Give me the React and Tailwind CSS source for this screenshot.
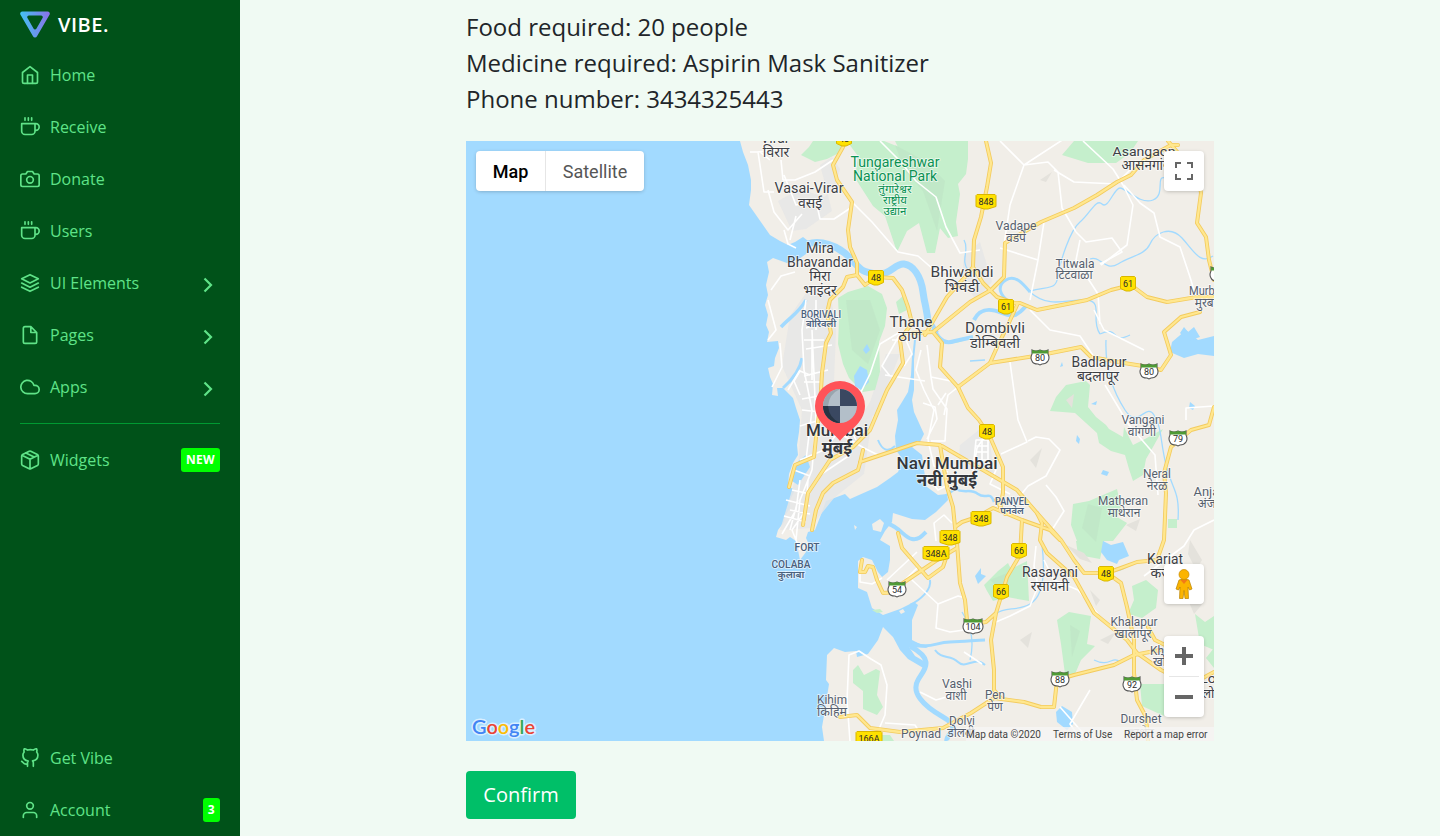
import React from "react";

const icons = {
  home: <><path d="M3 9l9-7 9 7v11a2 2 0 0 1-2 2H5a2 2 0 0 1-2-2z" /><path d="M9 22V12h6v10" /></>,
  coffee: <><path d="M18 8h1a4 4 0 0 1 0 8h-1M2 8h16v9a4 4 0 0 1-4 4H6a4 4 0 0 1-4-4V8zM6 1v3M10 1v3M14 1v3" /></>,
  camera: <><path d="M23 19a2 2 0 0 1-2 2H3a2 2 0 0 1-2-2V8a2 2 0 0 1 2-2h4l2-3h6l2 3h4a2 2 0 0 1 2 2z" /><circle cx="12" cy="13" r="4" /></>,
  layers: <path d="M12 2 2 7l10 5 10-5-10-5zM2 17l10 5 10-5M2 12l10 5 10-5" />,
  file: <path d="M13 2H6a2 2 0 0 0-2 2v16a2 2 0 0 0 2 2h12a2 2 0 0 0 2-2V9zM13 2v7h7" />,
  cloud: <path d="M18 10h-1.26A8 8 0 1 0 9 20h9a5 5 0 0 0 0-10z" />,
  box: <path d="M12.89 1.45l8 4A2 2 0 0 1 22 7.24v9.53a2 2 0 0 1-1.11 1.79l-8 4a2 2 0 0 1-1.79 0l-8-4a2 2 0 0 1-1.1-1.8V7.24a2 2 0 0 1 1.11-1.79l8-4a2 2 0 0 1 1.78 0zM2.32 6.16 12 11l9.68-4.84M12 22.76V11M7 3.5l10 5" />,
  github: <path d="M9 19c-5 1.5-5-2.5-7-3m14 6v-3.87a3.37 3.37 0 0 0-.94-2.61c3.14-.35 6.44-1.54 6.44-7A5.44 5.44 0 0 0 20 4.77 5.07 5.07 0 0 0 19.91 1S18.73.65 16 2.48a13.38 13.38 0 0 0-7 0C6.27.65 5.09 1 5.09 1A5.07 5.07 0 0 0 5 4.77a5.44 5.44 0 0 0-1.5 3.78c0 5.42 3.3 6.61 6.44 7A3.37 3.37 0 0 0 9 18.13V22" />,
  user: <><path d="M20 21v-2a4 4 0 0 0-4-4H8a4 4 0 0 0-4 4v2" /><circle cx="12" cy="7" r="4" /></>,
};

function NavItem({ icon, label, arrow, badge }) {
  return (
    <a className="flex h-[52px] items-center text-base text-[#5fe388]">
      <svg className="h-5 w-5 shrink-0" viewBox="0 0 24 24" fill="none" stroke="currentColor" strokeWidth="2" strokeLinecap="round" strokeLinejoin="round">{icons[icon]}</svg>
      <span className="ml-2.5 flex-1">{label}</span>
      {arrow && (
        <svg className="mr-[7px] mt-1 h-4 w-[10px]" viewBox="0 0 10 16" fill="none" stroke="currentColor" strokeWidth="2.2"><path d="M1.5 1.5 8 8l-6.500 6.500" /></svg>
      )}
      {badge && <span className="flex h-6 items-center rounded-[3px] bg-[#00ff00] px-[5px] text-xs font-bold tracking-[0.3px] text-white">{badge}</span>}
    </a>
  );
}

const greens = [
  "M801 155l8-8 4-6h30l-4 12-12 6-12 3z",
  "M850 141h34l20 8 36 20 10 20-13 14 4 20-6 30-8 0-8-30-12 8-10 21-12-36-12-10-18-28 3-22-12-16z",
  "M895 141h73v18l-2 15-8 10 2 10-4 28 2 14-10 2-12-15-4-24-14-20-18-28z",
  "M838 298l10-6 20-6 14 8 5 14-2 18-6 16 1 30-5 18-12 2-14-14-6-14-5-20 1-24z",
  "M1062 155l12-14h64l-8 12-14 10-28 0z",
  "M1050 411l6-14 10-12 20-4 4 4-2 22 8 10 10 8 3 4 14 8 1-10 9 18 12-6 18-10-10 18-7 12-3 16-10 6-4-12-4-14-14-4-12-8-2-10-22-20z",
  "M1073 504l16-3 28-12 4 18 -4 10 10 6-14 18-36 0-6-16z",
  "M984 585l14-14 10-8 3 6 16-8 2 40-22-4-14 4-6-10z",
  "M1057 620l12-8 22 4-4 28 8 2-14 14-6 14-10 0-4-30z",
  "M1134 600l-2-14 14-6 12 10-2 18-14 10-14-4z",
  "M1140 684l24 0v32l-22-10z",
  "M853 670l5-5 6 10 12-6 4 2-3 24 6 12-6 8-14-6 0-18-10-8z",
  "M870 735l20 0 4 6h-24z",
  "M1076 541l28 0-4 18-22-4z",
  "M1168 519h9v9h-9zM896 302l7-6 4 14-8 4z",
  "M1195 614l10 8 9-6v34l-14-6zM1206 658l8-10v20z",
  "M955 341l9-4 6 2-14 4zM872 610l8-1 3 3-6 1zM1190 341l14 0-10 3z",
];
const urban = [
  "M820 165l12-8 8 12-6 20-10 8-24-8-22 12 14 30 14-2 26-18-6-24z",
  "M808 290l22 0 6 40-2 50 4 40 26 0 10-16-10 70-30 24-24 30-30 2 18-60 4-60-20-44 8-50z",
  "M964 256l16-14 12 40-16 18-14-20z",
  "M960 445l20-16 10 14 4 30-36-4zM870 402l16-48 14 0-24 60-20 10z",
];
const waters = [
  "M854 376l6-10 7 4 2 12-8 8-6-4zM863 350l4-6 3 6-4 4z",
  "M1172 342l14-12 12 10 16-4v20l-16-2-14 4-14-6z",
  "M1103 541l8 4 12-3 6 14-10 4-2 4-10-4-6-8z",
  "M1056 712l6-6 10 6 1 12-6 6-10-8z",
  "M1180 333l4-6 4 5 6-5 6 10-12 4z",
  "M796 463l10-8 4 12-12 18-6-4z",
  "M975 576l6-8 0 6 5 2-8 8zM1062 362l-2 5 3-1zM1190 402l5 4-2 4-4-2zM1077 435l3 4-1 5-3-3zM1103 470l6 2-2 4-6-2zM1091 404l6-3-1 4z",
];
const creeks = [
  ["M808 244C820 240 838 245 850 258S862 272 876 274S895 263 904 264S921 276 923 292S928 310 928 326", 7],
  ["M915 340L913 360", 2],
  ["M930 320L937 333M933 328C940 342 946 344 955 341L973 337M974 320C980 308 990 308 1002 313S1018 315 1026 306", 4],
  ["M1010 302C1000 296 996 286 1006 280S1024 285 1030 292", 3],
  ["M781 327C790 317 798 314 806 300", 3.5],
  ["M783 388C792 380 800 370 802 358", 3],
  ["M910 646C935 660 925 668 918 680S922 705 943 717S944 735 947 741", 5],
  ["M912 643C930 650 935 642 950 642S975 640 985 640", 3],
  ["M935 650C942 660 950 654 958 662S975 655 985 665", 2],
  ["M889 524C900 528 905 538 912 539S922 536 926 532", 4],
  ["M930 580C932 590 920 600 910 605", 2],
  ["M955 489C965 494 970 488 978 494S990 490 994 502M944 497L955 489", 2.5],
  ["M878 440C882 450 888 453 895 446", 2],
];
const streams = [
  "M1030 291C1050 286 1056 290 1058 276S1070 230 1080 222S1096 198 1102 204S1114 188 1120 188S1140 205 1153 200S1155 175 1165 178",
  "M1090 259C1100 255 1105 272 1118 264S1145 255 1150 244S1170 225 1182 238S1200 265 1213 256",
  "M1030 292C1050 310 1070 298 1087 300S1090 320 1100 334",
  "M1106 340C1105 365 1112 390 1125 410S1146 402 1154 415S1160 440 1166 465S1180 490 1178 520",
  "M1042 545C1045 570 1044 596 1030 604S1005 606 996 614",
  "M962 612C970 624 975 640 970 660M1100 334C1120 325 1110 345 1130 335",
  "M1110 570C1125 575 1130 558 1145 562M1094 660C1110 668 1112 655 1120 662",
  "M970 361l15-1M964 240C970 250 960 260 968 270M978 470L962 485",
];
const lanes = [
  "M750 152l8 0 6 40 10 0M757 152l18-2M770 160l-10-8M781 160l2 20 12 0 20-8 18-12M768 190l6 22 14 18 14-16M784 175l12 30 20-4 4 18 14 0 18-12M790 240l6-24M784 230l4 14 8 4M852 202l20 20 26 30 20 4 16 14 26 4M880 141l20 20 16 20 20 16 10 30 14 26 20-3",
  "M1000 141l24 24 24-3 10 10 4 36 14 24M1024 165l-14 40-6 40M1024 165l46-30M1054 170l20 12 42 2 20-20M1083 141l30 28 10 16 10 20-6 40-26 20M1124 185l16 18 14 10 6 24 20 10 10 30 6 20",
  "M1000 248l38 12 6-38M1038 260l-8 40M1076 232l10 10 26-4 10 14-22 12M1080 240l-4 20 22 34 2 30M1030 310l20 20 30 6 20 30M1094 310l10 20 40 20M1010 362l8 58 9 22-26 12",
  "M1028 441l8-4 13 2 11 11-14 26-18 10-8 10M1046 485l10 12 8 14-14 22M1105 385l24 40 26 30 3 40",
  "M780 343l2 24-10 20M800 370l-12 20M806 300l-4 30 2 40 8 40-6 50M830 320l-24 8M832 345l-26 4M828 370l-24 6M824 395l-22 4M820 420l-20 6M812 330l4 90-4 50M812 340l0 40M804 340h20M804 382h16M802 410l18 2M842 400l18-6 10-20 10-30 20-12M846 420l10 20M800 480l-4 30-14 24M808 480l-2 30-14 20 8 20M786 500l24 6M784 516l22 6M794 470l16 6M792 490l18 4M790 510l20 4M798 500l-8 30M812 470l-12 30-4 40M840 430l-16 20-24 10M850 455l-30 20M844 436l20 12 16 8",
  "M800 395l-6-14 6-10 10 4M816 300l0 30M806 312h22M768 300l8 30-8 10M771 290l10-14 14-4",
  "M921 350l-5 20 8 20 10 20-6 30M927 345l4 32 20 4M931 377l2 12 14 20-2 32-14 0M923 403l12 4 2 12-10 20M938 405l8-12M885 375l40 6M900 334l-18 32 8 10M892 340l14 0 6 14-8 12M958 387l-10 8-4 20M976 440l12 0 0 20-14 0zM976 446h12M976 452h12M982 440v20M928 440l6 26 14 6M930 480l8 10 8-4",
  "M887 580l30-28M912 580l26 24-2 24 14 4 14-2M938 604l20-8 8 2M920 565l-14 14M860 572l0 10 12 2 10-6M936 541l-2-18 10-8 8 8",
  "M850 741l-3-40 2-46 10-4 12 8 10 6 6 20-2 30-6 14M885 723l30 2 6 10M920 692l16 8 14-4M996 622l14-6 20-10 8-20-4-20 2-20M964 652l18 12M1044 560l10 20 24 10 20 24M1090 690l-20 34 12 17M1060 707l30 34",
  "M1214 520l-20 10-10 16-40 30M1186 420l0-12 28-2M985 436l-8 12-4 24M996 470l-6 14 20 10",
];
const roads = [
  "M844 141L843 147L833 165L837 180L852 202L848 230L850 247L857 263L857 275L865 285L876 277L893 278L902 290L908 307L912 323L900 340L903 363L887 390L870 430L853 447L830 460L808 493L803 525",
  "M857 275L847 277L843 287L830 300L827 313L831 333L826 343L822 373L820 407L816 437L814 457L795 465L789 487",
  "M863 450L860 463L858 470L833 483L823 493L816 510L812 530M860 462L887 453L917 443L940 445L942 457L947 487L953 507L955 527L957 543L960 583L965 600L967 620",
  "M912 333L933 332L970 302L991 290L1004 277L1005 243L1041 222L1074 208L1097 195L1117 182L1131 175L1144 160L1171 145L1178 145",
  "M925 335L947 297L965 277L973 267M986 141L991 163L987 187L981 217L974 240L973 267L983 283L997 297L1014 303L1020 303L1037 310L1087 300L1111 290L1131 285L1147 297L1167 302L1197 297L1214 297",
  "M1168 141L1184 160L1198 175L1201 193L1197 223L1206 237L1209 260L1214 280M1200 312L1181 317L1164 332L1168 345L1171 355L1161 370L1149 367L1124 363L1091 357L1081 347L1041 355L990 363L958 387",
  "M933 332L942 343L940 367L958 387L968 408L979 420L990 437L1003 467L1003 493L1000 508M990 363L998 345L1007 327L1018 303L1014 303",
  "M942 446L983 470L1017 490L1037 513L1061 540L1074 560L1084 573L1107 573L1121 568L1137 562L1157 560L1164 540L1166 493L1164 473L1171 447L1191 430L1209 425L1214 407",
  "M955 527L962 522L977 517L993 508L1022 520L1050 530L1060 540M996 500L1005 514M1037 513L1042 523L1040 540L1047 553L1074 577L1094 613L1127 640L1137 653L1161 670L1190 685L1214 672",
  "M1107 573L1121 583L1127 607L1134 640L1134 673L1137 700L1146 717L1148 741M1134 655L1114 665L1074 675L1057 680L1054 707L1041 707L1024 702L994 698L971 713L943 728L900 732L870 728L857 715L840 717",
  "M1022 520L1020 555L1007 577L996 613L991 640L994 670L994 690L1001 698M972 624L986 622L996 613",
  "M898 533L902 548L928 578L943 567L947 555M900 585L937 560L957 548M862 560L860 572L865 572L868 566L873 567L877 580L883 593L896 592M1148 627L1155 640L1175 650M1134 655L1160 650",
];
const g = "#3d4045", sm = "#56606e", blue = "#4a607c", park = "#0b9153";
// x centre, baseline, size, width, text, colour, weight
const labels = [
  [775, 143, 14, 0, "Virar", g], [776, 157, 14, 0, "विरार", g],
  [809, 193, 14, 69, "Vasai-Virar", g], [810, 208, 14, 0, "वसई", g],
  [895, 167, 14, 89, "Tungareshwar", park], [895, 181, 14, 84, "National Park", park],
  [895, 193, 11.5, 0, "तुंगारेश्वर", park], [895, 204, 11.5, 0, "राष्ट्रीय", park], [895, 215, 11.5, 0, "उद्यान", park],
  [820, 253, 14, 28, "Mira", g], [820, 267, 14, 66, "Bhavandar", g], [820, 281, 14, 0, "मिरा", g], [820, 295, 14, 0, "भाइंदर", g],
  [821, 318, 10, 40, "BORIVALI", blue, 500], [821, 327, 9.5, 0, "बोरिवली", blue, 600],
  [962, 277, 15, 63, "Bhiwandi", g], [962, 292, 15, 0, "भिवंडी", g],
  [911, 327, 15, 43, "Thane", g], [910, 341, 15, 0, "ठाणे", g],
  [995, 333, 14, 60, "Dombivli", g], [995, 348, 14.5, 0, "डोम्बिवली", g],
  [1016, 230, 12, 41, "Vadape", sm], [1016, 242, 12, 0, "वडपे", sm],
  [1075, 268, 12, 39, "Titwala", sm], [1074, 279, 12, 0, "टिटवाळा", sm],
  [1144, 156, 13.5, 63, "Asangaon", g], [1146, 170, 13.5, 0, "आसनगांव", g],
  [1208, 295, 12, 38, "Murbad", sm], [1209, 307, 12, 0, "मुरबाड", sm],
  [1099, 367, 14, 55, "Badlapur", g], [1098, 381, 14, 0, "बदलापूर", g],
  [1143, 424, 12, 43, "Vangani", sm], [1142, 436, 12, 0, "वांगणी", sm],
  [1157, 478, 12, 28, "Neral", sm], [1157, 490, 12, 0, "नेरळ", sm],
  [1123, 505, 12, 50, "Matheran", sm], [1124, 517, 12, 0, "माथेरान", sm],
  [1210, 496, 12, 33, "Anjap", sm], [1210, 508, 12, 0, "अंजप", sm],
  [837, 436, 17, 62, "Mumbai", "#34373c", 500], [837, 454, 17, 0, "मुंबई", "#34373c", 700],
  [947, 469, 17, 101, "Navi Mumbai", "#34373c", 500], [947, 486, 17, 0, "नवी मुंबई", "#34373c", 700],
  [1012, 505, 10, 34, "PANVEL", blue, 500], [1012, 514, 9.5, 0, "पनवेल", blue, 600],
  [807, 551, 10, 25, "FORT", blue, 500], [791, 568, 10, 39, "COLABA", blue, 500], [791, 578, 10, 0, "कुलाबा", blue, 600],
  [1050, 577, 14, 56, "Rasayani", g], [1050, 591, 14, 0, "रसायनी", g],
  [1165, 564, 14, 36, "Karjat", g], [1165, 578, 14, 0, "कर्जत", g],
  [1134, 626, 12.5, 47, "Khalapur", sm], [1133, 638, 12.5, 0, "खालापूर", sm],
  [1170, 655, 12, 40, "Khopoli", sm], [1170, 666, 12, 0, "खोपोली", sm],
  [1225, 683, 13, 50, "Lonavla", g], [1225, 698, 13, 0, "लोणावळा", g],
  [832, 704, 12.5, 30, "Kihim", sm], [832, 716, 12.5, 0, "किहिम", sm],
  [957, 688, 12, 30, "Vashi", sm], [956, 700, 12, 0, "वाशी", sm],
  [995, 699, 12, 20, "Pen", sm], [995, 711, 12, 0, "पेण", sm],
  [921, 738, 12.5, 40, "Poynad", sm], [962, 725, 12, 26, "Dolvi", sm], [961, 737, 12, 0, "डोलवी", sm],
  [1141, 723, 12, 41, "Durshet", sm], [1141, 737, 12, 0, "दुरशेत", "#aaa"],
];
const shields = [
  [844, 139, "48"], [876, 278, "48"], [986, 202, "848"], [1128, 284, "61"], [1006, 307, "61"], [987, 432, "48"],
  [981, 519, "348"], [950, 538, "348"], [936, 554, "348A"], [1019, 551, "66"], [1001, 592, "66"], [1106, 574, "48"], [869, 739, "166A"],
];
const stateShields = [[1040, 357, "80"], [1149, 371, "80"], [1178, 438, "79"], [897, 589, "54"], [973, 626, "104"], [1060, 679, "88"], [1132, 684, "92"], [1219, 274, "79"]];

function MapArt() {
  return (
    <svg className="block h-[600px] w-[748px] font-['Roboto','Noto_Sans_Devanagari','Noto_Sans',sans-serif]" viewBox="466 141 748 600">
      <rect x="466" y="141" width="748" height="600" fill="#a2daff" />
      <path fill="#f1eee8" d="M740 141L743 152L748 165L751 180L751 190L749 205L756 215L763 225L770 235L780 241L788 245L795 242L803 237L812 244L806 254L799 259L787 263L773 258L767 262L769 272L766 285L768 295L765 305L768 315L766 325L769 332L767 342L778 341L779 348L775 358L774 366L768 368L770 377L773 384L772 395L778 396L777 388L783 388L793 398L796 408L800 420L799 432L797 445L798 455L793 463L789 474L788 486L795 490L790 500L790 508L785 516L784 522L778 530L776 537L786 540L790 537L796 541L798 550L800 560L806 552L809 545L806 538L808 532L815 530L822 512L826 501L845 494L850 499L877 487L890 478L898 472L903 460L896 450L895 436L898 420L897 410L902 402L908 392L911 375L912 356L914 356L914 390L912 400L914 412L924 434L920 442L912 447L922 455L924 470L927 487L938 495L947 494L948 500L936 512L925 520L912 519L893 513L892 522L885 531L880 540L890 546L890 560L888 572L882 577L878 572L872 560L863 557L858 561L858 588L867 592L872 608L883 615L900 609L914 602L918 605L912 620L912 640L928 648L909 647L915 656L927 663L925 669L908 659L900 650L893 637L883 627L878 640L868 654L857 657L856 651L845 652L834 648L827 655L826 680L829 684L825 710L822 727L824 741L1214 741L1214 141Z" />
      <path fill="#f1eee8" d="M872 524l8-5 4 4-3 9-8-2zM854 525l3 2-2 3zM899 611l4-2 2 3-4 2z" />
      {urban.map((d) => <path key={d} d={d} fill="#e6e6e6" opacity=".85" />)}
      {greens.map((d) => <path key={d} d={d} fill="#c5efcc" strokeLinejoin="round" />)}
      <path fill="#bfe6c6" opacity=".7" d="M895 145l30 16 20 20-8 50-14-40-18-20zM846 300l24 0 10 30-12 34-16-14zM1088 504l14 4-6 34-14-14zM990 580l20-8-4 22zM1070 625l10 6-8 26z" />
      <path fill="#e4e2dc" d="M1040 180l12-8-6 10zM1066 545l18 8 8 10-12-4zM1030 460l12-12-6 20zM1190 540l12 20-6 10-8-16zM1100 640l16-8-8 12zM1066 400l8-6-2 14zM1126 525l14-6-4 12zM1184 590l20 12-10 12zM1020 640l12-8-4 16zM1090 590l10 10-4 6z" />
      {creeks.map(([d, w]) => <path key={d} d={d} fill="none" stroke="#a2daff" strokeWidth={w} />)}
      {streams.map((d) => <path key={d} d={d} fill="none" stroke="#a2daff" strokeWidth="1.3" />)}
      {waters.map((d) => <path key={d} d={d} fill="#a2daff" />)}
      {lanes.map((d) => <path key={d} d={d} fill="none" stroke="#fff" strokeWidth="1.6" strokeLinejoin="round" />)}
      {roads.map((d) => <path key={d} d={d} fill="none" stroke="#f3cb5e" strokeWidth="4" strokeLinejoin="round" strokeLinecap="round" />)}
      {roads.map((d) => <path key={d} d={d} fill="none" stroke="#ffe78f" strokeWidth="2.3" strokeLinejoin="round" strokeLinecap="round" />)}
      {shields.map(([x, y, t]) => {
        const w = t.length === 2 ? 7.5 : t.length === 3 ? 10 : 13;
        return (
          <g key={`${x}-${y}`}>
            <path d={`M${x - w + 1} ${y - 7.5}H${x + w - 1}l1 1v11l-${w - 2} 2.5h-4l-${w - 2}-2.5v-11z`} fill="#ffe100" stroke="#d9b600" strokeWidth="1" strokeLinejoin="round" />
            <text x={x} y={y + 3.2} textAnchor="middle" fontSize="9" fill="#2b2b2b">{t}</text>
          </g>
        );
      })}
      {stateShields.map(([x, y, t]) => {
        const w = t.length === 2 ? 9 : 10;
        return (
          <g key={`${x}-${y}`}>
            <path d={`M${x - w + 1} ${y - 7}q4 2 ${w - 1} 0q4 2 ${w - 1} 0v4q2 4 0 7q-2 3-${w - 3} 3l-2 1l-2-1q-${w - 4} 0-${w - 3}-3q-2-3 0-7z`} fill="#fff" stroke="#555" strokeWidth="1.1" />
            <path d={`M${x - w + 1} ${y - 7}q4 1.5 ${w - 1} 0q4 1.5 ${w - 1} 0v3.5H${x - w + 1}z`} fill="#4f9a35" />
            <text x={x} y={y + 4} textAnchor="middle" fontSize="9" fill="#2b2b2b">{t}</text>
          </g>
        );
      })}
      {labels.map(([x, y, s, w, t, c, weight]) => (
        <text key={t + y} x={x} y={y} fontSize={s} fontWeight={weight || 400} fill={c} textAnchor="middle" stroke="#fff" strokeWidth="1.8" strokeOpacity=".6" strokeLinejoin="round" paintOrder="stroke" textLength={w || undefined} lengthAdjust="spacingAndGlyphs">{t}</text>
      ))}
      <path d="M840 441C835 433 815 424 815 406A25 25 0 0 1 865 406C865 424 845 433 840 441Z" fill="#ff5358" />
      <circle cx="840" cy="406" r="17" fill="#b3bfc9" />
      <path d="M840 406V389A17 17 0 0 1 857 406ZM840 406V423A17 17 0 0 1 823 406Z" fill="#3a4861" />
      <path d="M823 406A17 17 0 0 0 840 423Q829 418 828 406Z" fill="#273443" />
      <path d="M823 406A17 17 0 0 1 840 389Q829 394 828 406Z" fill="#99a5ae" />
      <text x="472" y="734" fontSize="20" fontWeight="600" className="font-['Lato',sans-serif]" textLength="63" stroke="#fff" strokeWidth="3" strokeOpacity=".6" strokeLinejoin="round" paintOrder="stroke">
        <tspan fill="#4285f4">G</tspan><tspan fill="#ea4335">o</tspan><tspan fill="#fbbc05">o</tspan><tspan fill="#4285f4">g</tspan><tspan fill="#34a853">l</tspan><tspan fill="#ea4335">e</tspan>
      </text>
    </svg>
  );
}

function MapPanel() {
  const card = "rounded-sm bg-white shadow-[0_1px_4px_-1px_rgba(0,0,0,0.3)]";
  return (
    <div className="relative h-[600px] w-[748px] overflow-hidden font-['Roboto',sans-serif]">
      <MapArt />
      <div className={`absolute left-2.5 top-2.5 flex h-10 items-center text-lg ${card}`}>
        <button className="h-10 w-[70px] border-r border-[#e6e6e6] pt-0.5 font-medium text-black">Map</button>
        <button className="h-10 w-[98px] pt-0.5 text-[#565656]">Satellite</button>
      </div>
      <button className={`absolute right-2.5 top-2.5 flex h-10 w-10 items-center justify-center ${card}`}>
        <svg className="h-[18px] w-[18px]" viewBox="0 0 18 18" fill="none" stroke="#666" strokeWidth="2"><path d="M1 6V1h5M12 1h5v5M17 12v5h-5M6 17H1v-5" /></svg>
      </button>
      <button className={`absolute right-2.5 top-[423px] flex h-10 w-10 items-center justify-center ${card}`}>
        <svg className="h-[30px] w-5" viewBox="0 0 20 30">
          <path d="M5 11q5-2.500 10 0l3 9-2.500 1-1.500-3 .5 11.500H11l-1-8-1 8H5.500L6 18l-1.500 3L2 20z" fill="#fbb400" stroke="#b98200" strokeWidth=".7" />
          <circle cx="10" cy="5.500" r="5" fill="#fbb400" stroke="#c58a00" strokeWidth=".7" />
          <path d="M6.500 11h7L10 15z" fill="#f27a17" />
        </svg>
      </button>
      <div className={`absolute right-2.5 top-[495px] flex w-10 flex-col items-center ${card}`}>
        <button className="flex h-10 w-10 items-center justify-center"><svg className="h-[18px] w-[18px]" viewBox="0 0 18 18"><path d="M7 0h4v7h7v4h-7v7H7v-7H0V7h7z" fill="#666" /></svg></button>
        <div className="h-px w-[30px] bg-[#e6e6e6]" />
        <button className="flex h-10 w-10 items-center justify-center"><svg className="h-1 w-[18px]" viewBox="0 0 18 4"><path d="M0 0h18v4H0z" fill="#666" /></svg></button>
      </div>
      <div className="absolute bottom-0 right-0 flex h-[14px] items-center bg-[#f5f5f5]/75 text-[10px] text-[#444]">
        <span className="w-[87px] whitespace-nowrap text-left">Map data ©2020</span>
        <span className="w-[71px] whitespace-nowrap">Terms of Use</span>
        <span className="w-[90px] whitespace-nowrap">Report a map error</span>
      </div>
    </div>
  );
}

export default function App() {
  return (
    <div className="flex h-[836px] w-full overflow-hidden bg-[#f0faf3] font-['Open_Sans','Noto_Sans',sans-serif] text-[#212529]">
      <aside className="flex w-60 shrink-0 flex-col bg-[#005219] px-5">
        <div className="flex h-[49px] items-center">
          <svg className="h-[27px] w-[30px]" viewBox="0 0 30 27">
            <defs><linearGradient id="logo" x1="0" y1="0" x2="1" y2="0"><stop offset="0" stopColor="#42c3f2" /><stop offset="1" stopColor="#8b70e8" /></linearGradient></defs>
            <path fill="url(#logo)" fillRule="evenodd" d="M2.500 0.500h25a2.200 2.200 0 0 1 2 3.300L17 25.300a2.200 2.200 0 0 1-4 0L.5 3.800A2.200 2.200 0 0 1 2.500.5zM9 4.500a1.700 1.700 0 0 0-1.500 2.600l6 10.500a1.700 1.700 0 0 0 3 0l6-10.500a1.700 1.700 0 0 0-1.500-2.600z" />
          </svg>
          <span className="ml-2 text-xl font-semibold tracking-[0.5px] text-white">VIBE.</span>
        </div>
        <nav className="flex flex-col">
          <NavItem icon="home" label="Home" />
          <NavItem icon="coffee" label="Receive" />
          <NavItem icon="camera" label="Donate" />
          <NavItem icon="coffee" label="Users" />
          <NavItem icon="layers" label="UI Elements" arrow />
          <NavItem icon="file" label="Pages" arrow />
          <NavItem icon="cloud" label="Apps" arrow />
          <div className="mb-[10px] mt-[10px] h-px bg-[#009a32]" />
          <NavItem icon="box" label="Widgets" badge="NEW" />
        </nav>
        <div className="mt-auto">
          <NavItem icon="github" label="Get Vibe" />
          <NavItem icon="user" label="Account" badge="3" />
        </div>
      </aside>
      <main className="pl-[226px] pt-[9px]">
        <div className="text-2xl leading-9">
          <p>Food required: 20 people</p>
          <p>Medicine required: Aspirin Mask Sanitizer</p>
          <p>Phone number: 3434325443</p>
        </div>
        <div className="mt-6"><MapPanel /></div>
        <button className="mt-[30px] h-12 w-[110px] rounded bg-[#00bf68] text-xl text-white">Confirm</button>
      </main>
    </div>
  );
}
